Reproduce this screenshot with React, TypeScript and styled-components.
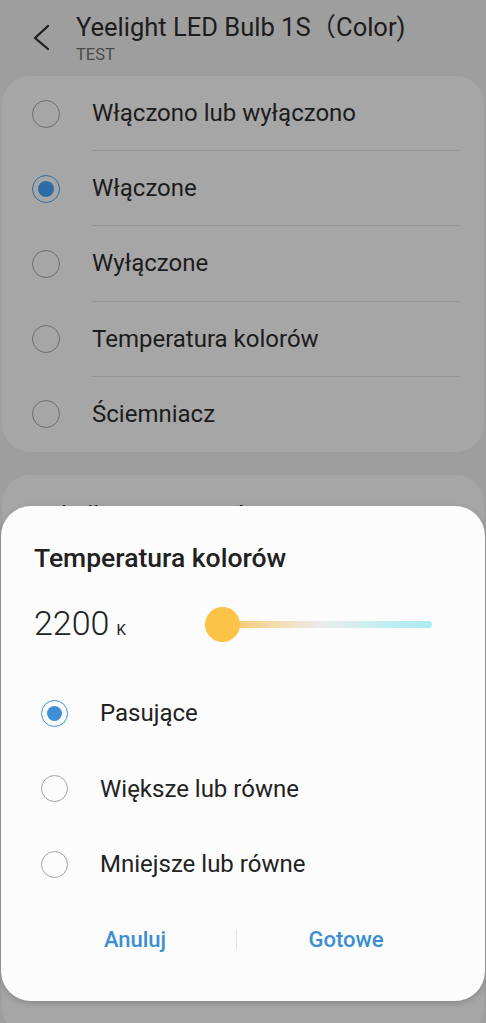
import React from "react";
import styled, { createGlobalStyle } from "styled-components";

const GlobalStyle = createGlobalStyle`
  html, body { margin: 0; padding: 0; background: #9e9e9e; }
  body { font-family: Roboto, "Noto Sans", "Noto Sans CJK SC", sans-serif; }
  * { box-sizing: border-box; }
`;

const Screen = styled.div`
  position: relative;
  width: 486px;
  height: 1023px;
  overflow: hidden;
  background: #9e9e9e;
`;

const Header = styled.header`
  display: flex;
  align-items: flex-start;
  height: 76px;
  padding: 12px 0 0 33px;
`;

const BackButton = styled.div`
  width: 18px;
  height: 28px;
  margin-top: 12px;
  margin-right: 25px;
  svg { display: block; }
`;

const TitleBlock = styled.div`
  display: flex;
  flex-direction: column;
`;

const Title = styled.div`
  font-size: 25.5px;
  line-height: 30px;
  color: #1c1c1c;
  white-space: nowrap;
`;

const Subtitle = styled.div`
  margin-top: 3px;
  font-size: 16.5px;
  line-height: 20px;
  color: #4a4a4a;
`;

const Card = styled.section`
  margin: 0 2px;
  background: #a6a6a6;
  border-radius: 28px;
`;

const Row = styled.div`
  display: flex;
  align-items: center;
  height: 75.2px;
  padding-left: 30px;
`;

const Radio = styled.span<{ $checked?: boolean; $dim?: boolean; $size: number }>`
  flex: 0 0 auto;
  display: flex;
  align-items: center;
  justify-content: center;
  width: ${(p) => p.$size}px;
  height: ${(p) => p.$size}px;
  border-radius: 50%;
  border: 1.5px solid
    ${(p) => (p.$checked ? (p.$dim ? "#2c6ca6" : "#3d8fd6") : p.$dim ? "#6e6e6e" : "#a2a2a2")};
  &::after {
    content: "";
    display: ${(p) => (p.$checked ? "block" : "none")};
    width: ${(p) => p.$size - 12}px;
    height: ${(p) => p.$size - 12}px;
    border-radius: 50%;
    background: ${(p) => (p.$dim ? "#2c6ca6" : "#3d8fd6")};
  }
`;

const RowLabel = styled.div<{ $divider?: boolean }>`
  flex: 1;
  align-self: stretch;
  display: flex;
  align-items: center;
  margin-left: 32px;
  margin-right: 25px;
  font-size: 24px;
  color: #1c1c1c;
  border-bottom: 1px solid ${(p) => (p.$divider ? "#959595" : "transparent")};
`;

const SecondCard = styled.section`
  margin: 23px 2px 0;
  height: 560px;
  background: #a6a6a6;
  border-radius: 28px;
  padding: 26px 33px 0;
  font-size: 24px;
  line-height: 28px;
  color: #1c1c1c;
`;

const Dialog = styled.div`
  position: absolute;
  left: 1px;
  right: 1px;
  bottom: 22px;
  background: #fcfcfc;
  border-radius: 30px;
  padding: 37px 30px 34px 33px;
  box-shadow: 0 2px 6px rgba(0, 0, 0, 0.18);
`;

const DialogTitle = styled.h2`
  margin: 0;
  font-size: 26.5px;
  line-height: 30px;
  font-weight: 500;
  color: #212121;
`;

const ValueRow = styled.div`
  display: flex;
  align-items: center;
  height: 44px;
  margin-top: 32px;
`;

const Value = styled.div`
  font-size: 34px;
  line-height: 44px;
  font-weight: 300;
  color: #222;
`;

const Unit = styled.span`
  font-size: 15px;
  margin-left: 7px;
  font-weight: 400;
`;

const Slider = styled.div`
  position: relative;
  width: 227px;
  height: 35px;
  margin-left: auto;
  margin-right: 23px;
  margin-bottom: 4px;
`;

const Track = styled.div`
  position: absolute;
  left: 17px;
  right: 0;
  top: 14px;
  height: 7px;
  border-radius: 4px;
  background: linear-gradient(90deg, #f7c561 0%, #f3dcae 25%, #ececec 48%, #c8eef1 72%, #a8ecf3 100%);
`;

const Thumb = styled.div`
  position: absolute;
  left: 0;
  top: 0;
  width: 35px;
  height: 35px;
  border-radius: 50%;
  background: #fbc348;
`;

const Options = styled.div`
  margin-top: 27px;
`;

const OptionRow = styled.div`
  display: flex;
  align-items: center;
  height: 75.5px;
  padding-left: 7px;
`;

const OptionLabel = styled.div`
  margin-left: 32px;
  font-size: 24px;
  color: #222;
`;

const Buttons = styled.div`
  display: flex;
  align-items: center;
  height: 56px;
  margin-top: 9px;
`;

const ActionButton = styled.button<{ $width?: number }>`
  flex: ${(p) => (p.$width ? `0 0 ${p.$width}px` : "1")};
  background: none;
  border: none;
  padding: 0;
  height: 100%;
  font-family: inherit;
  font-size: 22px;
  font-weight: 500;
  color: #3b8ed3;
`;

const ButtonDivider = styled.div`
  width: 1px;
  height: 20px;
  background: #e2e2e2;
`;

const cardItems = [
  { label: "Włączono lub wyłączono", checked: false },
  { label: "Włączone", checked: true },
  { label: "Wyłączone", checked: false },
  { label: "Temperatura kolorów", checked: false },
  { label: "Ściemniacz", checked: false },
];

const options = [
  { label: "Pasujące", checked: true },
  { label: "Większe lub równe", checked: false },
  { label: "Mniejsze lub równe", checked: false },
];

export default function App() {
  return (
    <Screen>
      <GlobalStyle />
      <Header>
        <BackButton>
          <svg width="18" height="28" viewBox="0 0 18 28">
            <path d="M15 2 L2 14 L15 25" fill="none" stroke="#1c1c1c" strokeWidth="2.2" strokeLinecap="round" strokeLinejoin="round" />
          </svg>
        </BackButton>
        <TitleBlock>
          <Title>Yeelight LED Bulb 1S（Color)</Title>
          <Subtitle>TEST</Subtitle>
        </TitleBlock>
      </Header>
      <Card>
        {cardItems.map((it, i) => (
          <Row key={it.label}>
            <Radio $checked={it.checked} $dim $size={28} />
            <RowLabel $divider={i < cardItems.length - 1}>{it.label}</RowLabel>
          </Row>
        ))}
      </Card>
      <SecondCard>Jak długo ma trwać ten stan?</SecondCard>
      <Dialog>
        <DialogTitle>Temperatura kolorów</DialogTitle>
        <ValueRow>
          <Value>
            2200<Unit>K</Unit>
          </Value>
          <Slider>
            <Track />
            <Thumb />
          </Slider>
        </ValueRow>
        <Options>
          {options.map((o) => (
            <OptionRow key={o.label}>
              <Radio $checked={o.checked} $size={27} />
              <OptionLabel>{o.label}</OptionLabel>
            </OptionRow>
          ))}
        </Options>
        <Buttons>
          <ActionButton $width={202}>Anuluj</ActionButton>
          <ButtonDivider />
          <ActionButton>Gotowe</ActionButton>
        </Buttons>
      </Dialog>
    </Screen>
  );
}
